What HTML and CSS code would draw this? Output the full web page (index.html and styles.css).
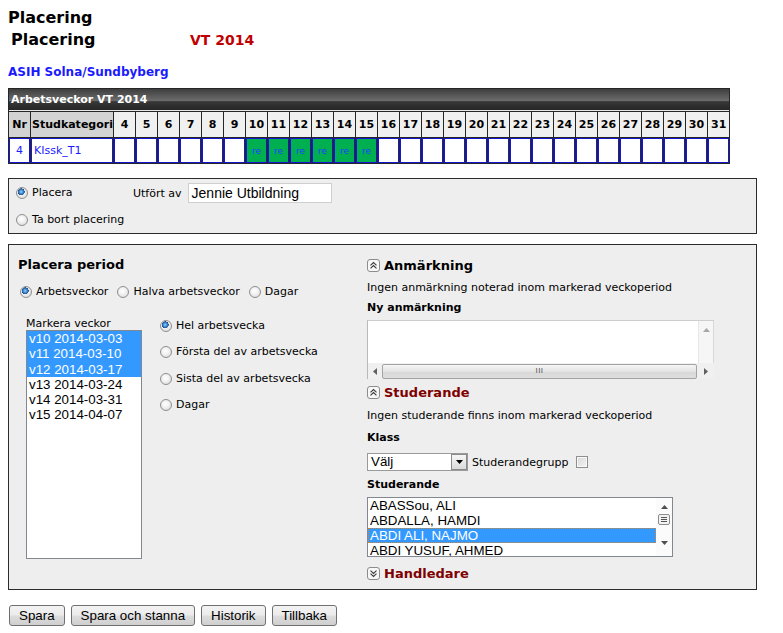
FILE: index.html
```html
<!DOCTYPE html>
<html lang="sv">
<head>
<meta charset="utf-8">
<title>Placering</title>
<link rel="stylesheet" href="styles.css">
</head>
<body>
<div class="page-title">Placering</div>
<div class="subtitle"><span class="sub-name">Placering</span><span class="term">VT 2014</span></div>
<div class="org">ASIH Solna/Sundbyberg</div>

<table class="weeks">
  <colgroup>
    <col class="w-nr"><col class="w-kat">
    <col class="w-wk"><col class="w-wk"><col class="w-wk"><col class="w-wk"><col class="w-wk"><col class="w-wk"><col class="w-wk">
    <col class="w-wk"><col class="w-wk"><col class="w-wk"><col class="w-wk"><col class="w-wk"><col class="w-wk"><col class="w-wk">
    <col class="w-wk"><col class="w-wk"><col class="w-wk"><col class="w-wk"><col class="w-wk"><col class="w-wk"><col class="w-wk">
    <col class="w-wk"><col class="w-wk"><col class="w-wk"><col class="w-wk"><col class="w-wk"><col class="w-wk"><col class="w-wk">
  </colgroup>
  <tr><th class="bar" colspan="30">Arbetsveckor VT 2014</th></tr>
  <tr class="head">
    <th class="c-nr">Nr</th><th class="c-kat">Studkategori</th>
    <th>4</th><th>5</th><th>6</th><th>7</th><th>8</th><th>9</th><th>10</th><th>11</th><th>12</th><th>13</th><th>14</th><th>15</th><th>16</th><th>17</th>
    <th>18</th><th>19</th><th>20</th><th>21</th><th>22</th><th>23</th><th>24</th><th>25</th><th>26</th><th>27</th><th>28</th><th>29</th><th>30</th><th>31</th>
  </tr>
  <tr class="data">
    <td class="c-nr">4</td><td class="c-kat">KIssk_T1</td>
    <td></td><td></td><td></td><td></td><td></td><td></td>
    <td class="re">re</td><td class="re">re</td><td class="re">re</td><td class="re">re</td><td class="re">re</td><td class="re">re</td>
    <td></td><td></td><td></td><td></td><td></td><td></td><td></td><td></td>
    <td></td><td></td><td></td><td></td><td></td><td></td><td></td><td></td>
  </tr>
</table>

<div class="box action">
  <div class="act-row">
    <span class="opt opt-placera"><span class="radio on"></span>Placera</span>
    <span class="lbl">Utfört av</span>
    <span class="textbox">Jennie Utbildning</span>
  </div>
  <div class="act-row second">
    <span class="opt"><span class="radio"></span>Ta bort placering</span>
  </div>
</div>

<div class="box period">
  <div class="lcol">
    <h3 class="sect">Placera period</h3>
    <div class="opts">
      <span class="opt first"><span class="radio on"></span>Arbetsveckor</span>
      <span class="opt"><span class="radio"></span>Halva arbetsveckor</span>
      <span class="opt"><span class="radio"></span>Dagar</span>
    </div>
    <div class="pick">
      <div class="weekpick">
        <div class="wlabel">Markera veckor</div>
        <div class="weeklist">
          <div class="item sel">v10 2014-03-03</div>
          <div class="item sel">v11 2014-03-10</div>
          <div class="item sel">v12 2014-03-17</div>
          <div class="item">v13 2014-03-24</div>
          <div class="item">v14 2014-03-31</div>
          <div class="item">v15 2014-04-07</div>
        </div>
      </div>
      <div class="parts">
        <span class="opt"><span class="radio on"></span>Hel arbetsvecka</span>
        <span class="opt"><span class="radio"></span>Första del av arbetsvecka</span>
        <span class="opt"><span class="radio"></span>Sista del av arbetsvecka</span>
        <span class="opt"><span class="radio"></span>Dagar</span>
      </div>
    </div>
  </div>

  <div class="rcol">
    <div class="rhead">
      <svg class="tog" width="13" height="13" viewBox="0 0 13 13"><rect x="0.5" y="0.5" width="12" height="12" rx="2.5" fill="#f7f7f7" stroke="#8c8c8c"/><path d="M3.5 6.3 6.5 3.5 9.5 6.3M3.5 9.3 6.5 6.5 9.5 9.3" fill="none" stroke="#3a3a3a" stroke-width="1.1"/></svg>
      <span>Anmärkning</span>
    </div>
    <div class="note">Ingen anmärkning noterad inom markerad veckoperiod</div>
    <div class="flabel">Ny anmärkning</div>
    <div class="tarea">
      <div class="ta-text"></div>
      <div class="ta-vs"><svg width="7" height="4" viewBox="0 0 7 4"><path d="M0 4 3.5 0 7 4Z" fill="#a8a8a8"/></svg></div>
      <div class="ta-hs">
        <span class="hs-arrow"><svg width="4" height="7" viewBox="0 0 4 7"><path d="M4 0 0 3.5 4 7Z" fill="#606060"/></svg></span>
        <span class="hs-thumb"><span class="grip">III</span></span>
        <span class="hs-arrow right"><svg width="4" height="7" viewBox="0 0 4 7"><path d="M0 0 4 3.5 0 7Z" fill="#606060"/></svg></span>
      </div>
    </div>

    <div class="rhead red second">
      <svg class="tog" width="13" height="13" viewBox="0 0 13 13"><rect x="0.5" y="0.5" width="12" height="12" rx="2.5" fill="#f7f7f7" stroke="#8c8c8c"/><path d="M3.5 6.3 6.5 3.5 9.5 6.3M3.5 9.3 6.5 6.5 9.5 9.3" fill="none" stroke="#3a3a3a" stroke-width="1.1"/></svg>
      <span>Studerande</span>
    </div>
    <div class="note n2">Ingen studerande finns inom markerad veckoperiod</div>
    <div class="flabel k">Klass</div>
    <div class="selrow">
      <span class="select"><span class="sel-text">Välj</span><span class="sel-btn"><svg width="7" height="4" viewBox="0 0 7 4"><path d="M0 0 7 0 3.5 4Z" fill="#000"/></svg></span></span>
      <span class="grp">Studerandegrupp</span>
      <span class="check"></span>
    </div>
    <div class="flabel s">Studerande</div>
    <div class="slist">
      <div class="s-items">
        <div class="sitem">ABASSou, ALI</div>
        <div class="sitem">ABDALLA, HAMDI</div>
        <div class="sitem sel">ABDI ALI, NAJMO</div>
        <div class="sitem">ABDI YUSUF, AHMED</div>
      </div>
      <div class="s-scroll">
        <svg width="7" height="4" viewBox="0 0 7 4"><path d="M0 4 3.5 0 7 4Z" fill="#505050"/></svg>
        <span class="s-thumb"><span></span><span></span><span></span></span>
        <svg class="down" width="7" height="4" viewBox="0 0 7 4"><path d="M0 0 7 0 3.5 4Z" fill="#505050"/></svg>
      </div>
    </div>

    <div class="rhead red third">
      <svg class="tog" width="13" height="13" viewBox="0 0 13 13"><rect x="0.5" y="0.5" width="12" height="12" rx="2.5" fill="#f7f7f7" stroke="#8c8c8c"/><path d="M3.5 3.7 6.5 6.5 9.5 3.7M3.5 6.7 6.5 9.5 9.5 6.7" fill="none" stroke="#3a3a3a" stroke-width="1.1"/></svg>
      <span>Handledare</span>
    </div>
  </div>
</div>

<div class="actions">
  <button class="btn">Spara</button>
  <button class="btn">Spara och stanna</button>
  <button class="btn">Historik</button>
  <button class="btn">Tillbaka</button>
</div>
</body>
</html>
```

FILE: styles.css
```css
* { box-sizing: border-box; }

body {
  margin: 8px;
  font-family: "DejaVu Sans", Verdana, sans-serif;
  font-size: 11px;
  color: #000;
  background: #fff;
}

.page-title {
  font-size: 16px;
  font-weight: bold;
  line-height: 19px;
}

.subtitle {
  display: flex;
  align-items: baseline;
  margin-top: 3px;
  padding-left: 3px;
  line-height: 19px;
}
.sub-name { width: 179px; font-size: 16px; font-weight: bold; }
.term { color: #c00000; font-size: 14px; font-weight: bold; }

.org {
  margin-top: 15px;
  color: #1a1aff;
  font-size: 12px;
  font-weight: bold;
  line-height: 14px;
}

/* week table */
.weeks {
  margin-top: 9px;
  width: 722px;
  table-layout: fixed;
  border-collapse: separate;
  border-spacing: 1px;
  background: #262626;
}
.w-nr { width: 21px; }
.w-kat { width: 82px; }
.w-wk { width: 21px; }

.weeks th, .weeks td {
  padding: 0;
  font-size: 11px;
  white-space: nowrap;
  overflow: hidden;
}
.weeks .bar {
  height: 22px;
  padding-left: 2px;
  text-align: left;
  color: #fff;
  font-weight: bold;
  background: linear-gradient(to bottom, #3e3e3e 0%, #575757 30%, #6c6c6c 56%, #383838 60%, #262626 100%);
  border-bottom: 1px solid #e8e8e8;
}
.head th {
  height: 25px;
  background: #f0f0f0;
  font-weight: bold;
  text-align: center;
}
.head .c-nr, .head .c-kat { background: #d3d3d3; }
.head .c-kat { text-align: left; padding-left: 1px; }

.data td {
  height: 25px;
  background: #fff;
  color: #1a1aff;
  box-shadow: inset 0 0 0 1px #1616cc;
}
.data .c-nr { text-align: center; }
.data .c-kat { padding-left: 3px; }
.data .re {
  background: #00b050;
  color: #1f3cff;
  font-size: 9px;
  text-align: center;
}

/* boxes */
.box {
  width: 749px;
  border: 1px solid #2b2b2b;
  background: #eeeeee;
}

.action {
  margin-top: 14px;
  height: 56px;
  padding: 4px 0 0 7px;
}
.act-row {
  display: flex;
  align-items: center;
  height: 20px;
}
.act-row.second { margin-top: 7px; }
.opt-placera { width: 117px; }
.textbox {
  margin-left: 6px;
  width: 144px;
  height: 20px;
  padding-left: 3px;
  border: 1px solid #cfcfcf;
  background: #fff;
  font-family: "Liberation Sans", Arial, sans-serif;
  font-size: 14px;
  line-height: 18px;
}

.opt {
  display: inline-flex;
  align-items: center;
  gap: 4px;
  height: 14px;
  line-height: 14px;
}

.radio {
  display: inline-block;
  flex: none;
  width: 12px;
  height: 12px;
  border-radius: 50%;
  border: 1px solid #8f8f8f;
  background: radial-gradient(circle at 45% 40%, #ffffff 0%, #f2f2f2 40%, #d2d2d2 100%);
}
.radio.on {
  background:
    radial-gradient(circle at 42% 38%, #9fd0f5 0px, #3a86cf 2px, #1b4f8f 3.3px, rgba(0,0,0,0) 3.6px),
    radial-gradient(circle at 45% 40%, #ffffff 0%, #f2f2f2 40%, #d2d2d2 100%);
}

.period {
  margin-top: 10px;
  height: 346px;
  display: flex;
}

.lcol {
  width: 358px;
  flex: none;
  padding: 12px 0 0 9px;
}
.sect {
  margin: 0;
  height: 16px;
  font-size: 13px;
  line-height: 16px;
  font-weight: bold;
}
.opts {
  margin-top: 12px;
  display: flex;
  align-items: center;
  height: 14px;
}
.opts .opt { margin-right: 9px; }
.opts .opt.first { margin-left: 2px; }

.pick {
  display: flex;
  margin-top: 18px;
}
.weekpick {
  margin-left: 8px;
  width: 116px;
}
.wlabel {
  height: 13px;
  line-height: 13px;
}
.weeklist {
  height: 229px;
  border: 1px solid #828790;
  background: #fff;
  font-family: "Liberation Sans", Arial, sans-serif;
  font-size: 13.33px;
}
.weeklist .item {
  height: 15.3px;
  line-height: 15.3px;
  padding-left: 2px;
}
.weeklist .item.sel { background: #3399ff; color: #fff; }

.parts {
  margin-left: 18px;
  padding-top: 2px;
  display: flex;
  flex-direction: column;
  gap: 12.3px;
}

.rcol {
  flex: 1;
  padding-top: 12px;
}
.rhead {
  display: flex;
  align-items: center;
  gap: 4px;
  height: 16px;
  font-size: 13px;
  font-weight: bold;
}
.rhead.red { color: #800000; }
.rhead.second { margin-top: 5px; }
.rhead.third { margin-top: 8px; }
.tog { flex: none; }

.note {
  margin-top: 8px;
  line-height: 14px;
}
.note.n2 { margin-top: 9px; }
.flabel {
  margin-top: 6px;
  font-weight: bold;
  line-height: 14px;
}
.flabel.k { margin-top: 8px; }
.flabel.s { margin-top: 7px; }

.tarea {
  margin-top: 5px;
  width: 347px;
  height: 59px;
  border-top: 1px solid #cdcdcd;
  border-left: 1px solid #b9b9b9;
  display: grid;
  grid-template-columns: 1fr 16px;
  grid-template-rows: 1fr 16px;
  background: #fff;
}
.ta-text { background: #fff; }
.ta-vs {
  background: #f6f6f6;
  border-left: 1px solid #e6e6e6;
  border-right: 1px solid #d9d9d9;
  display: flex;
  justify-content: center;
  padding-top: 7px;
}
.ta-hs {
  grid-column: 1 / 3;
  display: flex;
  align-items: center;
  background: #f0f0f0;
}
.hs-arrow {
  width: 14px;
  display: flex;
  justify-content: center;
}
.hs-arrow.right { width: 17px; }
.hs-thumb {
  flex: 1;
  height: 15px;
  border: 1px solid #a3a3a3;
  border-radius: 2px;
  background: linear-gradient(to bottom, #f5f5f5, #e4e4e4 50%, #d8d8d8 51%, #dedede);
  display: flex;
  align-items: center;
  justify-content: center;
}
.grip {
  font-family: "Liberation Sans", Arial, sans-serif;
  font-size: 8px;
  color: #555;
  letter-spacing: 0.5px;
  line-height: 8px;
}

.selrow {
  margin-top: 8px;
  display: flex;
  align-items: center;
  height: 18px;
}
.select {
  display: flex;
  width: 101px;
  height: 18px;
  border: 1px solid #9a9a9a;
  background: #fff;
  font-family: "Liberation Sans", Arial, sans-serif;
  font-size: 13.33px;
}
.sel-text { flex: 1; padding-left: 3px; line-height: 16px; }
.sel-btn {
  width: 16px;
  margin: 0;
  border: 1px solid #8a8a8a;
  background: linear-gradient(to bottom, #f6f6f6, #dadada);
  display: flex;
  align-items: center;
  justify-content: center;
}
.grp { margin-left: 4px; }
.check {
  margin-left: 8px;
  width: 12px;
  height: 12px;
  border: 1px solid #8f8f8f;
  background: linear-gradient(to bottom right, #d8d8d8, #f4f4f4);
  box-shadow: inset 0 0 0 1px #f8f8f8;
}

.slist {
  margin-top: 5px;
  width: 306px;
  height: 60px;
  border: 1px solid #828790;
  background: #fff;
  display: flex;
  overflow: hidden;
}
.s-items {
  flex: 1;
  overflow: hidden;
  font-family: "Liberation Sans", Arial, sans-serif;
  font-size: 13.33px;
}
.sitem {
  height: 15px;
  line-height: 15px;
  padding-left: 2px;
  white-space: nowrap;
}
.sitem.sel {
  background: #3399ff;
  color: #fff;
  outline: 1px dotted #d8862a;
  outline-offset: -1px;
}
.s-scroll {
  width: 16px;
  flex: none;
  background: #fbfbfb;
  display: flex;
  flex-direction: column;
  align-items: center;
  padding-top: 7px;
}
.s-thumb {
  margin-top: 5px;
  width: 12px;
  height: 11px;
  border: 1px solid #8d8d8d;
  border-radius: 2px;
  background: #f2f2f2;
  display: flex;
  flex-direction: column;
  justify-content: center;
  gap: 1px;
  padding: 0 2px;
}
.s-thumb span {
  display: block;
  height: 1px;
  background: #555;
}
.s-scroll .down { margin-top: 16px; }

.actions {
  margin-top: 15px;
  padding-left: 1px;
  display: flex;
  gap: 6px;
}
.btn {
  height: 21px;
  padding: 0 9px;
  border: 1px solid #707070;
  border-radius: 3px;
  background: linear-gradient(to bottom, #f3f3f3 0%, #ebebeb 48%, #dddddd 52%, #cfcfcf 100%);
  font-family: "Liberation Sans", Arial, sans-serif;
  font-size: 13.33px;
  color: #000;
  line-height: 19px;
}
```
